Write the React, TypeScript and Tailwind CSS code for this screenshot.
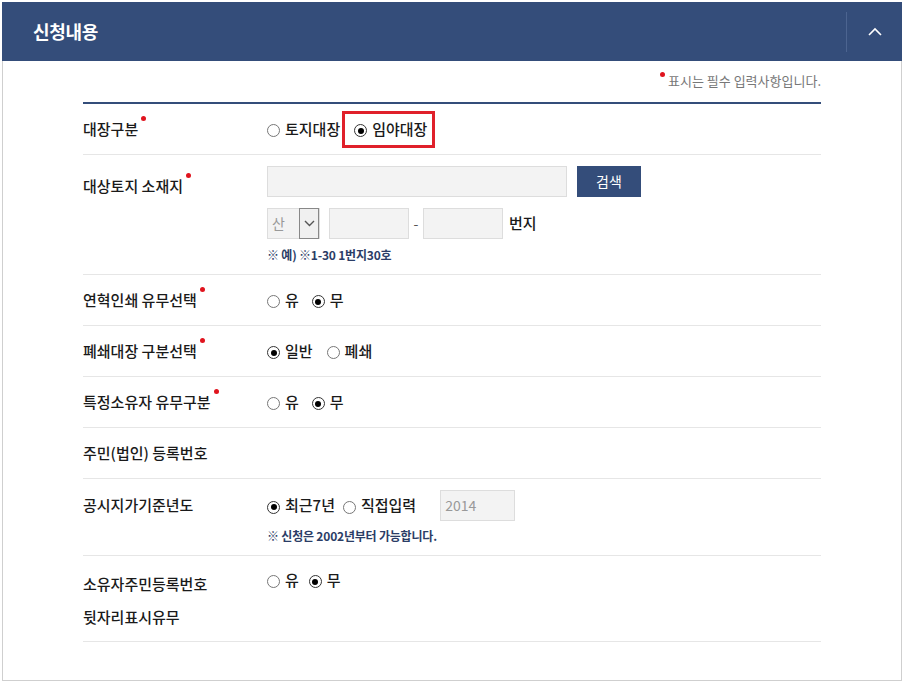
import React from 'react';

const FONT = "font-['Noto_Sans_CJK_KR','Noto_Sans',sans-serif]";

const Dot = () => (
  <span className="absolute -right-[8px] top-[-2px] h-[5px] w-[5px] rounded-full bg-[#e0141e]" />
);

const Label: React.FC<{ text: string; required?: boolean }> = ({ text, required }) => (
  <span className="relative inline-block text-[15px] font-medium text-[#1a1a1a]">
    {text}
    {required && <Dot />}
  </span>
);

const Radio: React.FC<{ checked?: boolean; label: string; className?: string }> = ({ checked, label, className }) => (
  <label className={`inline-flex items-center ${className ?? ''}`}>
    <span
      className={`mt-[3px] mr-[5px] flex h-[13px] w-[13px] items-center justify-center rounded-full border bg-white ${
        checked ? 'border-[#333]' : 'border-[#777]'
      }`}
    >
      {checked && <span className="h-[6px] w-[6px] rounded-full bg-black" />}
    </span>
    <span className="text-[15px] font-medium text-[#1a1a1a]">{label}</span>
  </label>
);

const Row: React.FC<{ label: React.ReactNode; className?: string; children?: React.ReactNode }> = ({ label, className, children }) => (
  <div className={`flex border-b border-[#e6e6e6] ${className ?? ''}`}>
    <div className="w-[184px] shrink-0">{label}</div>
    <div className="flex-1">{children}</div>
  </div>
);

const Hint: React.FC<{ children: React.ReactNode }> = ({ children }) => (
  <p className="text-[12px] font-bold leading-[16px] tracking-[-0.2px] text-[#2b3d66]">{children}</p>
);

export default function App() {
  return (
    <div className={`min-h-[683px] w-[904px] bg-white pt-[2px] pl-[2px] ${FONT}`}>
      <div className="w-[900px]">
        <div className="flex h-[59px] items-center bg-[#344d7a]">
          <h2 className="ml-[31px] flex-1 text-[18px] font-bold tracking-[-0.3px] text-white">신청내용</h2>
          <div className="flex h-[40px] w-[56px] items-center justify-center border-l border-[#4c6490]">
            <svg width="14" height="9" viewBox="0 0 14 9" fill="none">
              <path d="M1 8 L7 2 L13 8" stroke="white" strokeWidth="1.6" />
            </svg>
          </div>
        </div>

        <div className="h-[620px] border-x border-b border-[#cfcfcf] pl-[80px] pr-[80px]">
          <div className="flex h-[41px] items-end justify-end pb-[12px]">
            <span className="relative pl-[8px] text-[13px] text-[#777]">
              <span className="absolute left-0 top-[1px] h-[5px] w-[5px] rounded-full bg-[#e0141e]" />
              표시는 필수 입력사항입니다.
            </span>
          </div>
          <div className="border-t-2 border-[#344d7a]" />

          <Row label={<div className="flex h-[50px] items-center"><Label text="대장구분" required /></div>}>
            <div className="flex h-[50px] items-center">
              <Radio label="토지대장" />
              <div className="ml-[2px] flex h-[37px] items-center border-[3px] border-[#e0202a] pl-[9px] pr-[5px]">
                <Radio checked label="임야대장" />
              </div>
            </div>
          </Row>

          <Row label={<div className="flex h-[42px] items-end"><Label text="대상토지 소재지" required /></div>} className="h-[120px]">
            <div className="pt-[11px]">
              <div className="flex gap-[10px]">
                <div className="h-[31px] w-[300px] border border-[#ddd] bg-[#f3f3f3]" />
                <button className="h-[31px] w-[64px] bg-[#344d7a] text-[14px] text-white">검색</button>
              </div>
              <div className="mt-[11px] flex items-center">
                <div className="flex h-[31px] w-[53px] items-center border border-[#ddd] bg-[#f3f3f3]">
                  <span className="flex-1 pl-[4px] text-[14px] text-[#999]">산</span>
                  <span className="flex h-[31px] w-[20px] items-center justify-center border border-[#888] bg-[#f0f0f0]">
                    <svg width="11" height="7" viewBox="0 0 11 7" fill="none">
                      <path d="M1 1 L5.5 5.5 L10 1" stroke="#555" strokeWidth="1.4" />
                    </svg>
                  </span>
                </div>
                <div className="ml-[9px] h-[31px] w-[80px] border border-[#ddd] bg-[#f3f3f3]" />
                <span className="w-[14px] text-center text-[14px] text-[#555]">-</span>
                <div className="h-[31px] w-[80px] border border-[#ddd] bg-[#f3f3f3]" />
                <span className="ml-[6px] text-[15px] font-medium text-[#1a1a1a]">번지</span>
              </div>
              <div className="mt-[8px]">
                <Hint>※ 예) ※1-30 1번지30호</Hint>
              </div>
            </div>
          </Row>

          <Row label={<div className="flex h-[50px] items-center"><Label text="연혁인쇄 유무선택" required /></div>}>
            <div className="flex h-[50px] items-center">
              <Radio label="유" />
              <Radio checked label="무" className="ml-[13px]" />
            </div>
          </Row>

          <Row label={<div className="flex h-[50px] items-center"><Label text="폐쇄대장 구분선택" required /></div>}>
            <div className="flex h-[50px] items-center">
              <Radio checked label="일반" />
              <Radio label="폐쇄" className="ml-[14px]" />
            </div>
          </Row>

          <Row label={<div className="flex h-[50px] items-center"><Label text="특정소유자 유무구분" required /></div>}>
            <div className="flex h-[50px] items-center">
              <Radio label="유" />
              <Radio checked label="무" className="ml-[13px]" />
            </div>
          </Row>

          <Row label={<div className="flex h-[50px] items-center"><Label text="주민(법인) 등록번호" /></div>} />

          <Row label={<div className="flex h-[53px] items-center"><Label text="공시지가기준년도" /></div>} className="h-[77px]">
            <div className="pt-[11px]">
              <div className="flex items-center">
                <Radio checked label="최근7년" />
                <Radio label="직접입력" className="ml-[8px]" />
                <div className="ml-[24px] flex h-[31px] w-[75px] items-center border border-[#ddd] bg-[#f3f3f3] pl-[4px] text-[14px] text-[#999]">
                  2014
                </div>
              </div>
              <div className="mt-[7px]">
                <Hint>※ 신청은 2002년부터 가능합니다.</Hint>
              </div>
            </div>
          </Row>

          <Row
            label={
              <div className="pt-[11px] text-[15px] font-medium leading-[33px] text-[#1a1a1a]">
                소유자주민등록번호
                <br />
                뒷자리표시유무
              </div>
            }
            className="h-[86px]"
          >
            <div className="flex h-[48px] items-center">
              <Radio label="유" />
              <Radio checked label="무" className="ml-[10px]" />
            </div>
          </Row>
        </div>
      </div>
    </div>
  );
}
